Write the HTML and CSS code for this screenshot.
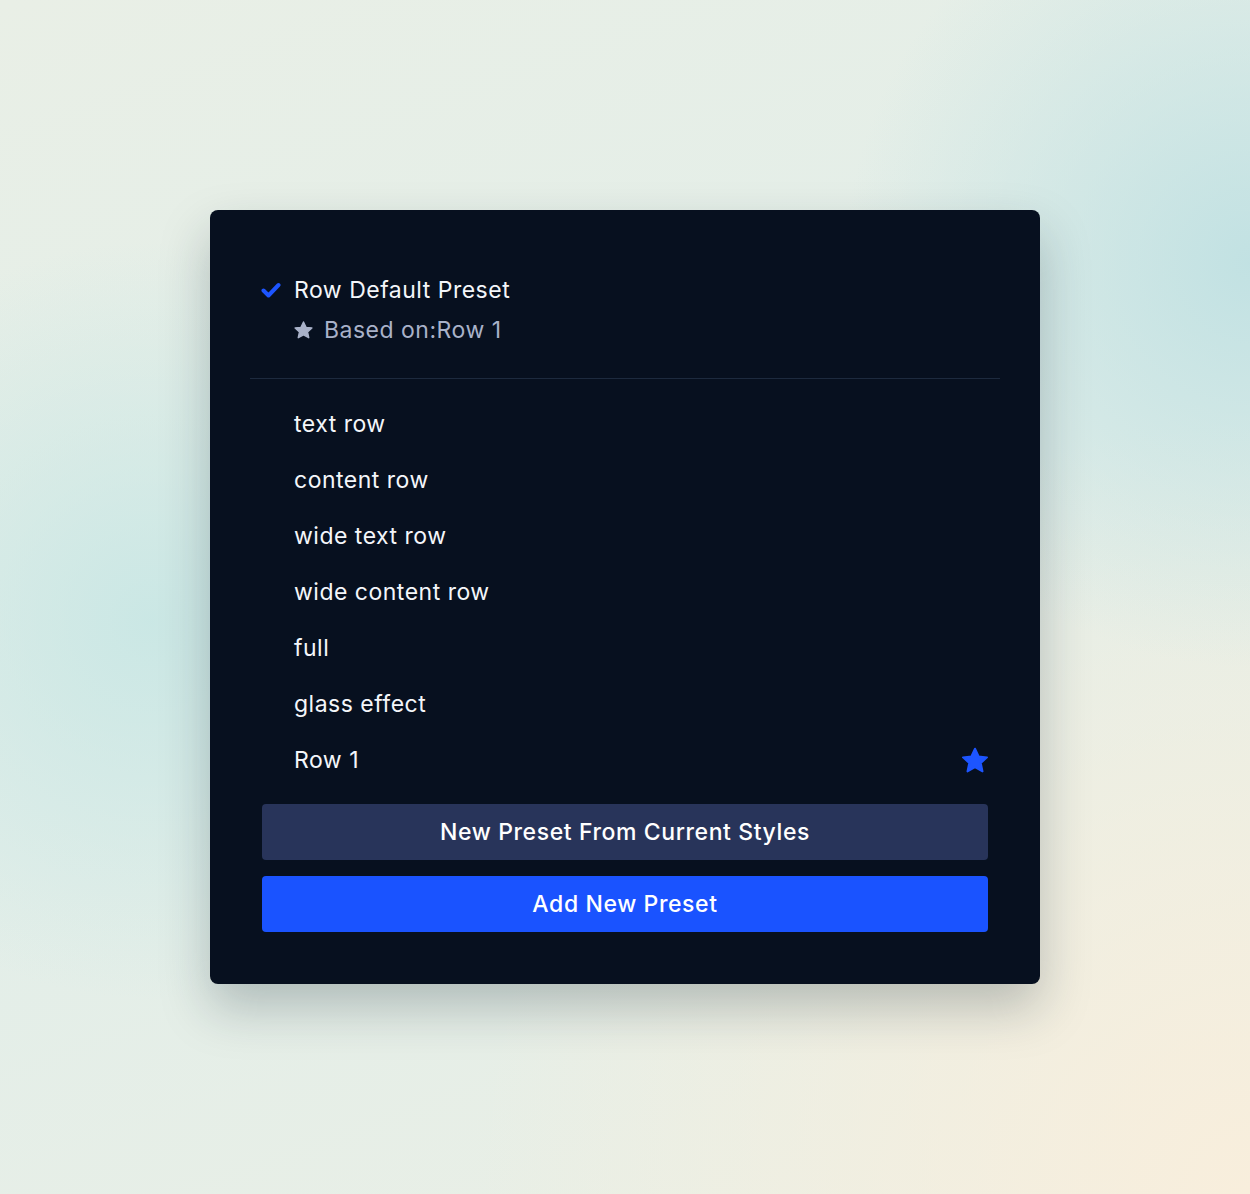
FILE: index.html
```html
<!DOCTYPE html>
<html lang="en">

<head>
    <meta charset="UTF-8">
    <meta name="viewport" content="width=device-width, initial-scale=1.0">
    <title>Row Presets</title>
    <link rel="stylesheet" href="styles.css">
</head>

<body>
    <div class="panel">
        <div class="current">
            <div class="current-title">
                <svg class="check" viewBox="0 0 20 16" width="20" height="16">
                    <path d="M2.5 8.5 L7.5 13.5 L17.5 3" fill="none" stroke="#1d55ff" stroke-width="4" stroke-linecap="round" stroke-linejoin="round" />
                </svg>
                <span>Row Default Preset</span>
            </div>
            <div class="current-base">
                <svg class="star-small" viewBox="0 0 24 24" width="21" height="21">
                    <path d="M12 2.2 L14.9 8.4 L21.6 9.1 L16.6 13.6 L18 20.3 L12 16.9 L6 20.3 L7.4 13.6 L2.4 9.1 L9.1 8.4 Z" fill="#a9b2c9" stroke="#a9b2c9" stroke-width="1.6" stroke-linejoin="round" />
                </svg>
                <span>Based on:Row 1</span>
            </div>
        </div>

        <ul class="preset-list">
            <li class="preset">text row</li>
            <li class="preset">content row</li>
            <li class="preset">wide text row</li>
            <li class="preset">wide content row</li>
            <li class="preset">full</li>
            <li class="preset">glass effect</li>
            <li class="preset">
                <span>Row 1</span>
                <svg class="star" viewBox="0 0 24 24" width="30" height="30">
                    <path d="M12 2.2 L14.9 8.4 L21.6 9.1 L16.6 13.6 L18 20.3 L12 16.9 L6 20.3 L7.4 13.6 L2.4 9.1 L9.1 8.4 Z" fill="#1d55ff" stroke="#1d55ff" stroke-width="1.6" stroke-linejoin="round" />
                </svg>
            </li>
        </ul>

        <div class="actions">
            <button class="button button-dark">New Preset From Current Styles</button>
            <button class="button button-blue">Add New Preset</button>
        </div>
    </div>
</body>

</html>
```

FILE: styles.css
```css
body {
    font-family: Inter, "Noto Sans", sans-serif;
    margin: 0;
    height: 1194px;
    display: flex;
    justify-content: center;
    align-items: flex-start;
    background:
        radial-gradient(circle at 100% 22%, rgba(190, 224, 226, 0.9), rgba(190, 224, 226, 0) 26%),
        radial-gradient(circle at 12% 52%, rgba(198, 230, 228, 0.85), rgba(198, 230, 228, 0) 30%),
        radial-gradient(circle at 100% 100%, rgba(248, 238, 220, 1), rgba(248, 238, 220, 0) 45%),
        linear-gradient(160deg, #e9efe6, #e2eee9 50%, #ebefe5);
}

.panel {
    width: 830px;
    box-sizing: border-box;
    margin-top: 210px;
    padding: 64px 40px 52px;
    background: #07101f;
    border-radius: 8px;
    box-shadow: 0 24px 50px rgba(20, 40, 50, 0.25);
    color: #f4f6fa;
}

.current {
    padding: 0 11px 32px;
    border-bottom: 1px solid #1d2a3e;
}

.current-title,
.current-base {
    display: flex;
    align-items: center;
    font-size: 23px;
    line-height: 32px;
    letter-spacing: 0.5px;
}

.current-title span {
    margin-left: 13px;
}

.current-base {
    margin-top: 8px;
    padding-left: 32px;
    color: #a9b2c9;
}

.current-base span {
    margin-left: 10px;
}

.preset-list {
    list-style: none;
    margin: 0;
    padding: 17px 0 0;
}

.preset {
    display: flex;
    justify-content: space-between;
    align-items: center;
    height: 56px;
    padding: 0 10px 0 44px;
    font-size: 23px;
    letter-spacing: 0.5px;
}

.star {
    margin-top: 2px;
}

.actions {
    display: flex;
    flex-direction: column;
    gap: 16px;
    margin: 16px 12px 0;
}

.button {
    height: 56px;
    border: none;
    border-radius: 4px;
    font-family: inherit;
    font-size: 23px;
    font-weight: 500;
    letter-spacing: 0.6px;
    color: #fff;
}

.button-dark {
    background: #28345a;
}

.button-blue {
    background: #1a53ff;
}
```
